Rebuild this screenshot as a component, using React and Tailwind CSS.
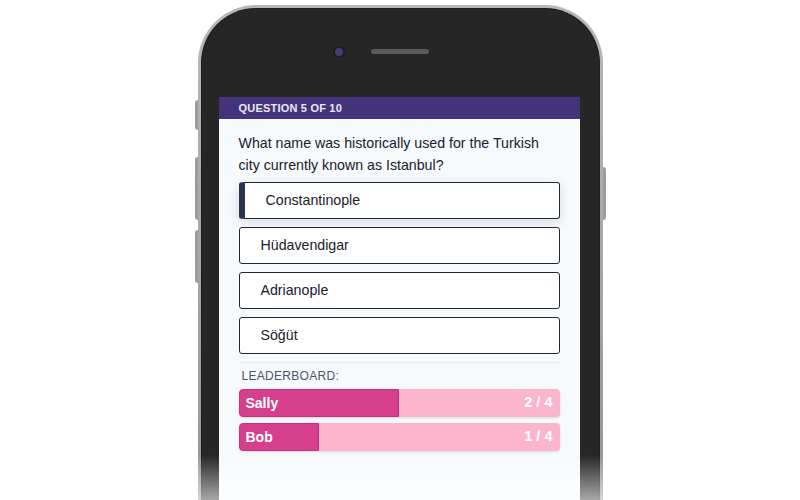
import React from 'react';

const options = ['Constantinople', 'Hüdavendigar', 'Adrianople', 'Söğüt'];

const leaders = [
    { name: 'Sally', score: 2, total: 4 },
    { name: 'Bob', score: 1, total: 4 },
];

const font = { fontFamily: '"Liberation Sans", Arial, sans-serif' };

const App = () => {
    return (
        <div className="relative w-[800px] h-[500px] bg-white overflow-hidden flex justify-center pt-[5px]" style={font}>
            {/* Phone body */}
            <div className="relative w-[405px] h-[620px] shrink-0 rounded-[58px] bg-gradient-to-b from-[#b8b8b8] to-[#8e8e8e] p-[3px]">
                {/* side buttons */}
                <div className="absolute left-[-3px] top-[95px] w-[3px] h-[30px] rounded-l bg-[#9c9c9c]" />
                <div className="absolute left-[-3px] top-[152px] w-[3px] h-[63px] rounded-l bg-[#9c9c9c]" />
                <div className="absolute left-[-3px] top-[225px] w-[3px] h-[53px] rounded-l bg-[#9c9c9c]" />
                <div className="absolute right-[-3px] top-[162px] w-[3px] h-[53px] rounded-r bg-[#9c9c9c]" />

                <div className="h-full rounded-[55px] bg-[#1c1c1c] p-[1px]">
                    <div className="h-full rounded-[54px] bg-[#262626] px-[17px]">
                        {/* camera + speaker */}
                        <div className="h-[88px] pb-[3px] flex items-center justify-center gap-[28px] pr-[36px]">
                            <div className="w-[8px] h-[8px] rounded-full bg-[#4a3b73] ring-2 ring-[#1d1d22]" />
                            <div className="w-[58px] h-[5px] rounded-full bg-[#5a5a5a]" />
                        </div>

                        {/* screen */}
                        <div className="w-[361px] bg-[#f7fafc] h-[420px]">
                            <div className="h-[22px] bg-[#44337a] px-[20px] flex items-center text-[11px] font-bold tracking-[0.2px] text-[#ebe7f7]">
                                QUESTION 5 OF 10
                            </div>
                            <div className="px-[20px] pt-[13px]">
                                <p className="text-[14.2px] leading-[22px] text-[#1a202c]">
                                    What name was historically used for the Turkish city currently known as Istanbul?
                                </p>
                                <div className="mt-[6px] flex flex-col gap-[8px]">
                                    {options.map((opt, i) => (
                                        <div
                                            key={opt}
                                            className={`h-[37px] flex items-center rounded-[3px] bg-white border-[1.5px] border-[#1f2638] text-[14.2px] text-[#1a202c] ${
                                                i === 0
                                                    ? 'border-l-[6px] border-l-[#2a3550] pl-[21px] shadow-[0_3px_12px_rgba(0,0,0,0.12)]'
                                                    : 'pl-[21px]'
                                            }`}
                                        >
                                            {opt}
                                        </div>
                                    ))}
                                </div>

                                <div className="mt-[8px] h-px bg-[#e6ebf1]" />

                                <div className="mt-[5px] pl-[3px] text-[12px] leading-[16px] tracking-[0.3px] text-[#4a5568]">
                                    LEADERBOARD:
                                </div>
                                <div className="mt-[5px] flex flex-col gap-[6px]">
                                    {leaders.map((l) => (
                                        <div
                                            key={l.name}
                                            className="relative h-[28px] rounded-[4px] bg-[#fbb6ce] overflow-hidden flex items-center justify-between px-[7px] shadow-sm"
                                        >
                                            <div
                                                className="absolute left-0 top-0 bottom-0 bg-[#d53f8c] border border-[#c53080] rounded-l-[4px]"
                                                style={{ width: `${(l.score / l.total) * 100}%` }}
                                            />
                                            <span className="relative text-[14px] font-bold text-white">{l.name}</span>
                                            <span className="relative text-[14.5px] font-bold text-white">
                                                {l.score} / {l.total}
                                            </span>
                                        </div>
                                    ))}
                                </div>
                            </div>
                        </div>
                    </div>
                </div>
            </div>

            {/* bottom fade */}
            <div className="absolute left-0 right-0 bottom-0 h-[45px] bg-gradient-to-b from-transparent to-white/60 pointer-events-none" />
        </div>
    );
};

export default App;
